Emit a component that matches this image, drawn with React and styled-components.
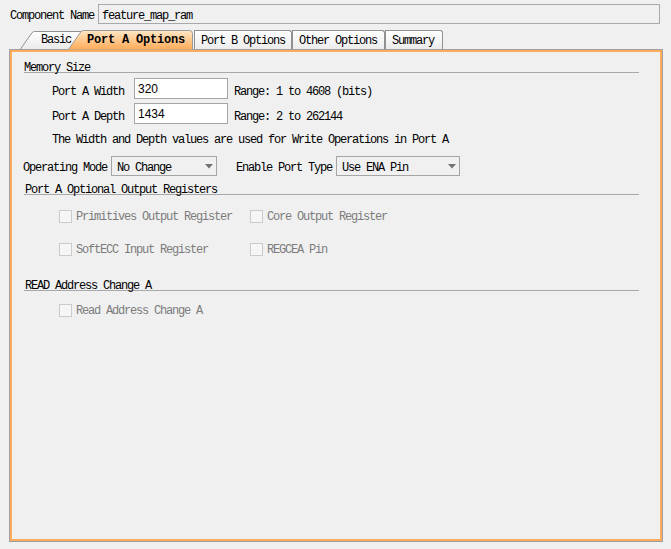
import React from "react";
import styled, { createGlobalStyle } from "styled-components";

const Global = createGlobalStyle`
  html, body, #root { margin: 0; padding: 0; height: 100%; }
  body {
    background: #f0f0f0;
    font-family: "Liberation Mono", "DejaVu Sans Mono", monospace;
    font-size: 12px;
    color: #000;
    overflow: hidden;
  }
`;

const Page = styled.div`
  width: 671px;
  height: 549px;
  display: flex;
  flex-direction: column;
  box-sizing: border-box;
  background: #f0f0f0;
`;

const Txt = styled.span`
  font-family: "Liberation Mono", "DejaVu Sans Mono", monospace;
  font-size: 12px;
  letter-spacing: -1.2px;
  white-space: nowrap;
  padding-top: ${(p) => p.$pt || 0}px;
  color: ${(p) => (p.$disabled ? "#7c7c7c" : "#000")};
  font-weight: ${(p) => (p.$bold ? 700 : 400)};
`;

const TopRow = styled.div`
  display: flex;
  align-items: center;
  padding: 4px 11px 0 10px;
  height: 20px;
  gap: 4px;
`;

const NameInput = styled.div`
  flex: 1;
  height: 20px;
  box-sizing: border-box;
  border: 1px solid #a9a9a9;
  background: #f0f0f0;
  display: flex;
  align-items: center;
  padding-left: 3px;
`;

const TabStrip = styled.div`
  display: flex;
  align-items: flex-end;
  margin-top: 6px;
  padding-left: 20px;
  height: 19px;
`;

const ShapedTab = styled.div`
  position: relative;
  width: ${(p) => p.$w}px;
  height: 19px;
  margin-left: ${(p) => p.$ml || 0}px;
  z-index: ${(p) => p.$z || 1};
  display: flex;
  align-items: center;
  padding-left: ${(p) => p.$pl}px;
  box-sizing: border-box;
`;

const TabBg = styled.svg`
  position: absolute;
  left: 0;
  top: 0;
  width: 100%;
  height: 100%;
  overflow: visible;
`;

const TabLabel = styled.span`
  position: relative;
  line-height: 19px;
  padding-top: 1px;
`;

const PlainTab = styled.div`
  width: ${(p) => p.$w}px;
  height: 19px;
  box-sizing: border-box;
  margin-left: ${(p) => p.$ml || 0}px;
  border: 1px solid #919191;
  border-bottom: none;
  border-top-right-radius: 3px;
  background: linear-gradient(#ffffff, #ececec);
  display: flex;
  align-items: center;
  padding-left: 6px;
`;

const Panel = styled.div`
  margin: 0 8px 0 9px;
  height: 493px;
  box-sizing: border-box;
  border: 1px solid #a0a0a0;
  box-shadow: inset 0 0 0 2px #ffad5b;
  padding: 8px 23px 0 14px;
  display: flex;
  flex-direction: column;
`;

const SectionHeader = styled.div`
  height: 14px;
  border-bottom: 1px solid #a8a8a8;
  margin-top: ${(p) => p.$mt || 0}px;
  padding-left: ${(p) => p.$pl || 0}px;
  display: flex;
  align-items: flex-end;
`;

const HeaderText = styled(Txt)`
  line-height: 8px;
`;

const FieldRow = styled.div`
  display: flex;
  align-items: center;
  height: 21px;
  margin-top: ${(p) => p.$mt}px;
  padding-left: 28px;
`;

const FieldLabel = styled(Txt)`
  width: 82px;
`;

const TextBox = styled.div`
  width: 94px;
  height: 21px;
  box-sizing: border-box;
  border: 1px solid #a5a5a5;
  background: #fff;
  display: flex;
  align-items: center;
  padding-left: 3px;
  font-family: "Liberation Sans", Arial, sans-serif;
  font-size: 12px;
  margin-right: 6px;
`;

const Note = styled.div`
  margin-top: 7px;
  padding-top: 2px;
  line-height: 14px;
  height: 14px;
  padding-left: 28px;
`;

const ModeRow = styled.div`
  display: flex;
  align-items: center;
  height: 20px;
  margin-top: 9px;
  margin-left: -1px;
`;

const SelectBox = styled.div`
  width: ${(p) => p.$w}px;
  height: 20px;
  box-sizing: border-box;
  border: 1px solid #a5a5a5;
  background: #f0f0f0;
  display: flex;
  align-items: center;
  justify-content: space-between;
  padding: 0 3px 0 5px;
  margin-left: 4px;
  margin-right: ${(p) => p.$mr || 0}px;
`;

const CheckGrid = styled.div`
  display: grid;
  grid-template-columns: 191px auto;
  row-gap: 20px;
  margin-top: ${(p) => p.$mt}px;
  padding-left: 35px;
`;

const CheckItem = styled.div`
  display: flex;
  align-items: center;
  height: 13px;
  gap: 4px;
`;

const Box = styled.div`
  width: 13px;
  height: 13px;
  box-sizing: border-box;
  border: 1px solid #cbcbcb;
  background: #f6f6f6;
  flex: none;
`;

const Arrow = () => (
  <svg width="8" height="5" viewBox="0 0 8 5">
    <path d="M0 0 L8 0 L4 4.5 Z" fill="#727272" />
  </svg>
);

function Check({ label }) {
  return (
    <CheckItem>
      <Box />
      <Txt $disabled $pt={1}>
        {label}
      </Txt>
    </CheckItem>
  );
}

export default function App() {
  return (
    <Page>
      <Global />
      <TopRow>
        <Txt $pt={4}>Component Name</Txt>
        <NameInput>
          <Txt $pt={4}>feature_map_ram</Txt>
        </NameInput>
      </TopRow>

      <TabStrip>
        <ShapedTab $w={66} $pl={21} $z={1}>
          <TabBg viewBox="0 0 66 19" preserveAspectRatio="none">
            <defs>
              <linearGradient id="gw" x1="0" y1="0" x2="0" y2="1">
                <stop offset="0" stopColor="#ffffff" />
                <stop offset="1" stopColor="#ebebeb" />
              </linearGradient>
            </defs>
            <path
              d="M0.5 19 L12 2.8 Q13 1.5 14.5 1.5 L66 1.5 L66 19 Z"
              fill="url(#gw)"
            />
            <path d="M0.5 19 L12 2.8 Q13 1.5 14.5 1.5 L66 1.5" fill="none" stroke="#919191" />
          </TabBg>
          <TabLabel>
            <Txt>Basic</Txt>
          </TabLabel>
        </ShapedTab>
        <ShapedTab $w={125} $ml={-18} $pl={19} $z={3}>
          <TabBg viewBox="0 0 125 19" preserveAspectRatio="none">
            <defs>
              <linearGradient id="go" x1="0" y1="0" x2="0" y2="1">
                <stop offset="0" stopColor="#fee6c6" />
                <stop offset="1" stopColor="#ffac58" />
              </linearGradient>
            </defs>
            <path
              d="M0.5 19.5 L13 1.6 Q14 0.5 15.5 0.5 L121.5 0.5 Q124.5 0.5 124.5 3.5 L124.5 19.5 Z"
              fill="url(#go)"
            />
            <path
              d="M0.5 19.5 L13 1.6 Q14 0.5 15.5 0.5 L121.5 0.5 Q124.5 0.5 124.5 3.5 L124.5 19.5"
              fill="none"
              stroke="#9a9a9a"
            />
          </TabBg>
          <TabLabel>
            <Txt $bold style={{ letterSpacing: "-0.2px" }}>Port A Options</Txt>
          </TabLabel>
        </ShapedTab>
        <PlainTab $w={98} $ml={1}>
          <Txt $pt={1}>Port B Options</Txt>
        </PlainTab>
        <PlainTab $w={93}>
          <Txt $pt={1}>Other Options</Txt>
        </PlainTab>
        <PlainTab $w={58}>
          <Txt $pt={1}>Summary</Txt>
        </PlainTab>
      </TabStrip>

      <Panel>
        <SectionHeader>
          <HeaderText>Memory Size</HeaderText>
        </SectionHeader>
        <FieldRow $mt={5}>
          <FieldLabel $pt={7}>Port A Width</FieldLabel>
          <TextBox>320</TextBox>
          <Txt $pt={7}>Range: 1 to 4608 (bits)</Txt>
        </FieldRow>
        <FieldRow $mt={4}>
          <FieldLabel $pt={7}>Port A Depth</FieldLabel>
          <TextBox>1434</TextBox>
          <Txt $pt={7}>Range: 2 to 262144</Txt>
        </FieldRow>
        <Note>
          <Txt>The Width and Depth values are used for Write Operations in Port A</Txt>
        </Note>

        <ModeRow>
          <Txt $pt={4}>Operating Mode</Txt>
          <SelectBox $w={106} $mr={19}>
            <Txt $pt={3}>No Change</Txt>
            <Arrow />
          </SelectBox>
          <Txt $pt={4}>Enable Port Type</Txt>
          <SelectBox $w={124}>
            <Txt $pt={3}>Use ENA Pin</Txt>
            <Arrow />
          </SelectBox>
        </ModeRow>

        <SectionHeader $mt={4} $pl={1}>
          <HeaderText>Port A Optional Output Registers</HeaderText>
        </SectionHeader>
        <CheckGrid $mt={15}>
          <Check label="Primitives Output Register" />
          <Check label="Core Output Register" />
          <Check label="SoftECC Input Register" />
          <Check label="REGCEA Pin" />
        </CheckGrid>

        <SectionHeader $mt={20} $pl={1}>
          <HeaderText>READ Address Change A</HeaderText>
        </SectionHeader>
        <CheckGrid $mt={13}>
          <Check label="Read Address Change A" />
        </CheckGrid>
      </Panel>
    </Page>
  );
}
